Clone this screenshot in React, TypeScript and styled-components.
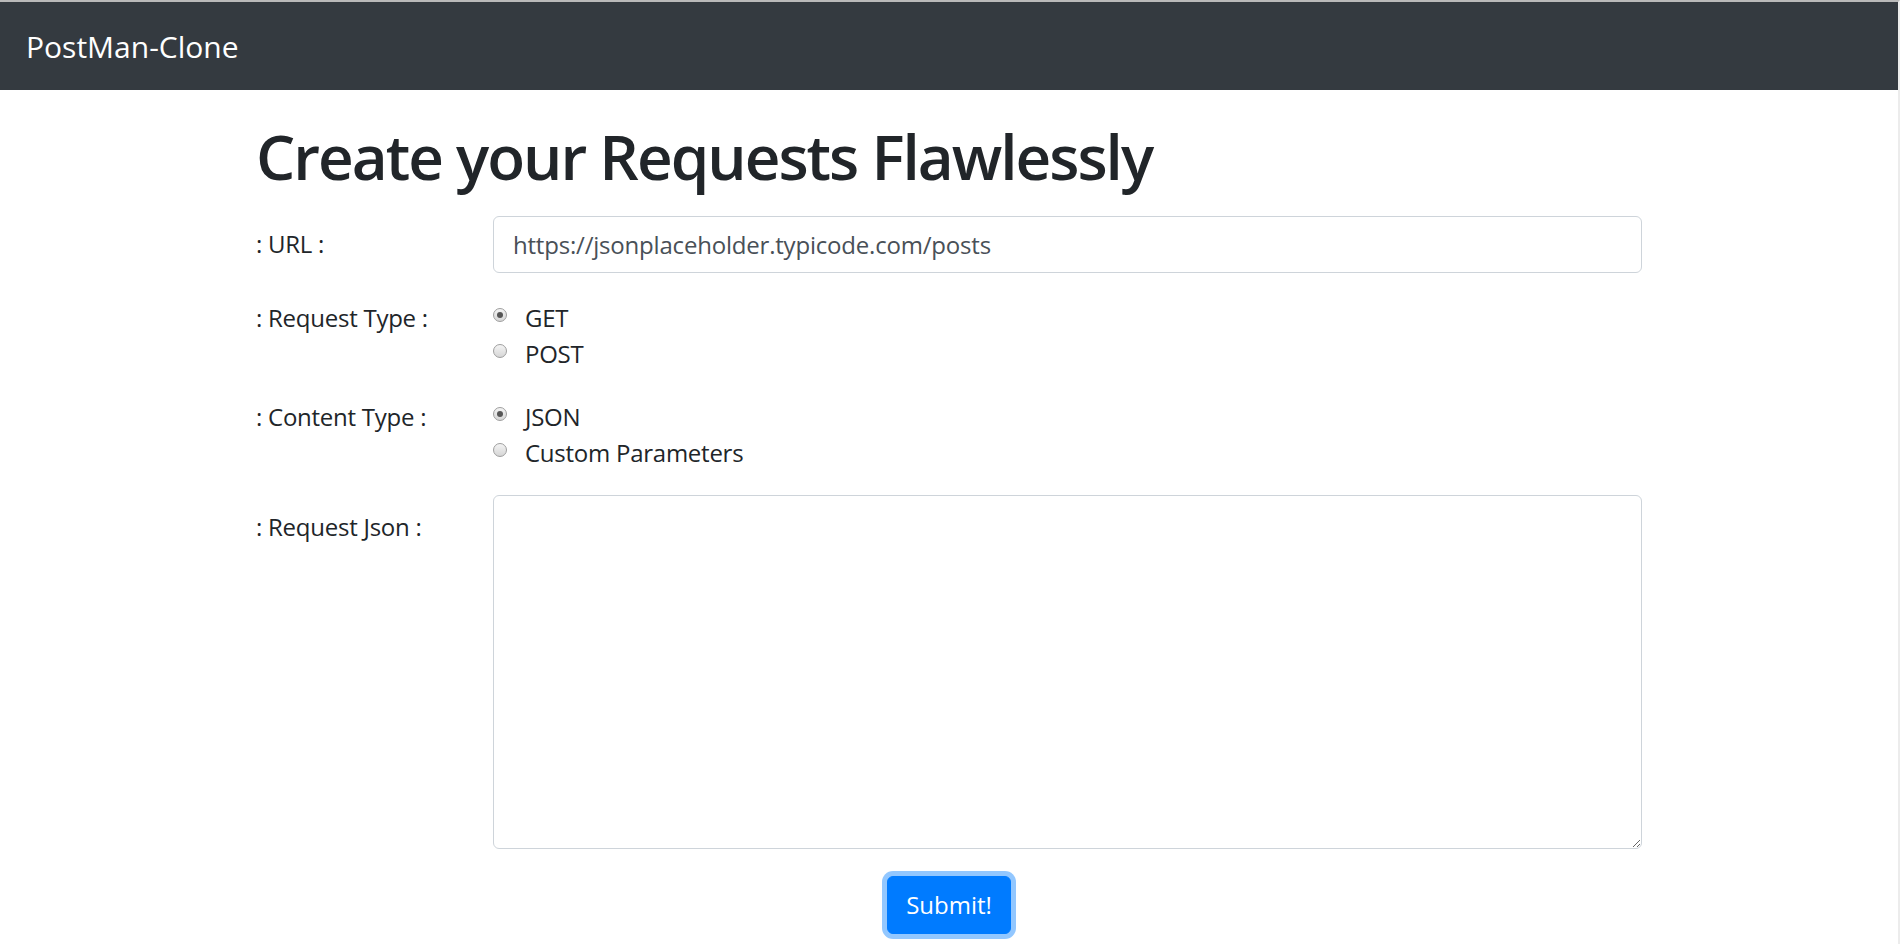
import React, { useState } from 'react';
import styled, { createGlobalStyle } from 'styled-components';

const GlobalStyle = createGlobalStyle`
  html, body {
    margin: 0;
    padding: 0;
    background: #fff;
  }
  body {
    font-family: "Open Sans", "Noto Sans", Arial, sans-serif;
    color: #212529;
    font-size: 24px;
    line-height: 1.5;
  }
  * { box-sizing: border-box; }
`;

const Page = styled.div`
  min-height: 944px;
  border-top: 2px solid #b9b9b9;
  border-right: 2px solid #ececec;
`;

const Navbar = styled.nav`
  height: 88px;
  background: #343a40;
  display: flex;
  align-items: center;
  padding-left: 26px;
`;

const Brand = styled.a`
  color: #fff;
  font-size: 30px;
  line-height: 1.5;
  text-decoration: none;
`;

const Container = styled.main`
  width: 1386px;
  margin: 0 auto;
  letter-spacing: -0.25px;
`;

const Heading = styled.h1`
  margin: 29px 0 23px;
  font-size: 62px;
  font-weight: 600;
  line-height: 1.2;
  letter-spacing: -2px;
  color: #212529;
`;

const FormRow = styled.div`
  display: grid;
  grid-template-columns: 237px 1fr;
  margin-bottom: 24px;
`;

const Label = styled.label<{ $top: number }>`
  padding-top: ${p => p.$top}px;
  font-size: 24px;
  line-height: 36px;
`;

const TextInput = styled.input`
  height: 57px;
  width: 100%;
  padding: 9px 19px;
  font-family: inherit;
  font-size: 24px;
  line-height: 36px;
  letter-spacing: -0.2px;
  color: #495057;
  border: 1px solid #ced4da;
  border-radius: 6px;
  outline: none;
`;

const RadioGroup = styled.div`
  padding-top: 3px;
  display: flex;
  flex-direction: column;
`;

const RadioLine = styled.label`
  display: flex;
  align-items: center;
  height: 36px;
  cursor: pointer;
`;

const Radio = styled.input.attrs({ type: 'radio' })`
  appearance: none;
  margin: -6px 18px 0 0;
  width: 14px;
  height: 14px;
  border-radius: 50%;
  border: 1px solid #9e9e9e;
  background: linear-gradient(#f4f4f4, #d6d6d6);
  display: grid;
  place-items: center;
  &:checked::after {
    content: '';
    width: 6px;
    height: 6px;
    border-radius: 50%;
    background: #565656;
  }
`;

const TextArea = styled.textarea`
  width: 100%;
  height: 354px;
  padding: 9px 19px;
  font-family: inherit;
  font-size: 24px;
  color: #495057;
  border: 1px solid #ced4da;
  border-radius: 6px;
  outline: none;
`;

const Actions = styled.div`
  display: flex;
  justify-content: center;
  padding-top: 3px;
`;

const SubmitButton = styled.button`
  padding: 10px 18px;
  font-family: inherit;
  font-size: 24px;
  line-height: 36px;
  color: #fff;
  background: #007bff;
  border: 1px solid #007bff;
  border-radius: 6px;
  box-shadow: 0 0 0 5px rgba(38, 143, 255, 0.5);
  cursor: pointer;
`;

export default function App() {
  const [method, setMethod] = useState('GET');
  const [contentType, setContentType] = useState('JSON');

  return (
    <>
      <GlobalStyle />
      <Page>
        <Navbar>
          <Brand href="#">PostMan-Clone</Brand>
        </Navbar>
        <Container>
          <Heading>Create your Requests Flawlessly</Heading>
          <FormRow>
            <Label $top={10}>: URL :</Label>
            <TextInput defaultValue="https://jsonplaceholder.typicode.com/posts" />
          </FormRow>
          <FormRow>
            <Label $top={3}>: Request Type :</Label>
            <RadioGroup>
              <RadioLine>
                <Radio name="method" checked={method === 'GET'} onChange={() => setMethod('GET')} />
                GET
              </RadioLine>
              <RadioLine>
                <Radio name="method" checked={method === 'POST'} onChange={() => setMethod('POST')} />
                POST
              </RadioLine>
            </RadioGroup>
          </FormRow>
          <FormRow>
            <Label $top={3}>: Content Type :</Label>
            <RadioGroup>
              <RadioLine>
                <Radio name="ctype" checked={contentType === 'JSON'} onChange={() => setContentType('JSON')} />
                JSON
              </RadioLine>
              <RadioLine>
                <Radio name="ctype" checked={contentType === 'CUSTOM'} onChange={() => setContentType('CUSTOM')} />
                Custom Parameters
              </RadioLine>
            </RadioGroup>
          </FormRow>
          <FormRow>
            <Label $top={14}>: Request Json :</Label>
            <TextArea />
          </FormRow>
          <Actions>
            <SubmitButton type="button">Submit!</SubmitButton>
          </Actions>
        </Container>
      </Page>
    </>
  );
}
